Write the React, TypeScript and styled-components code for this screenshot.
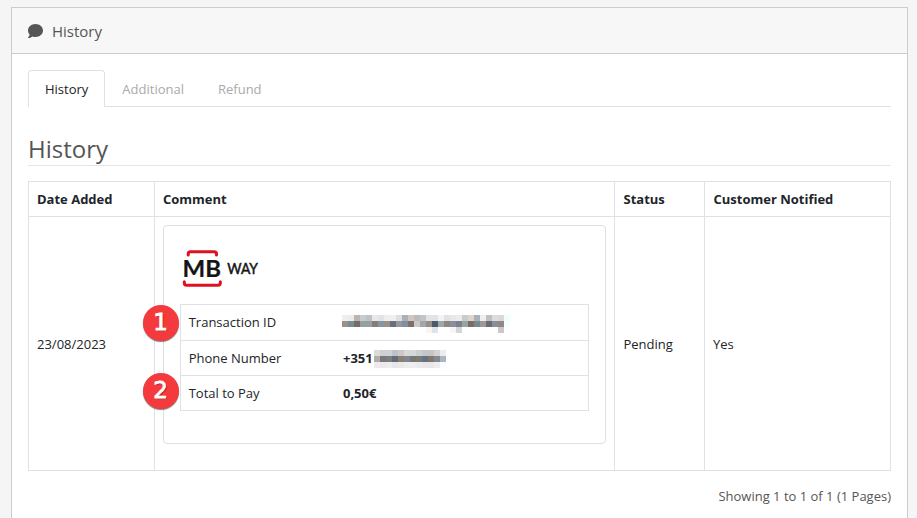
import React from "react";
import styled, { createGlobalStyle } from "styled-components";

const Global = createGlobalStyle`
  *, *::before, *::after { box-sizing: border-box; }
  body { margin: 0; background: #f5f5f5; color: #212529;
    font: 13px/19.5px "Open Sans", "Noto Sans", sans-serif; }
`;
const Page = styled.main`height: 518px; overflow: hidden; padding: 7px 9px 0 11px;`;
const Card = styled.section`
  height: 511px; background: #fff; border: 1px solid #ccc; border-bottom: 0;
`;
const CardHeader = styled.header`
  height: 46px; padding: 3px 16px 0; display: flex; align-items: center; gap: 9px;
  background: #f7f7f7; border-bottom: 1px solid #ccc;
  color: #555; font-size: 15px;
`;
const CommentIcon = styled.svg`display: block; width: 15px; height: 16px; margin-top: -3px;`;
const CardBody = styled.div`padding: 16px 16px 0;`;
const Tabs = styled.nav`display: flex; height: 37px; border-bottom: 1px solid #dee2e6;`;
const Tab = styled.a<{ $active?: boolean }>`
  height: 37px; padding: 9px 16px 0; border: 1px solid ${p => (p.$active ? "#dee2e6" : "transparent")};
  border-bottom: 0; border-radius: 4px 4px 0 0;
  background: ${p => (p.$active ? "#fff" : "transparent")};
  color: ${p => (p.$active ? "#222" : "#aaa")};
`;
const Title = styled.h2`
  margin: 26px 0 15px; height: 33px; border-bottom: 1px solid #e5e5e5;
  font-size: 24px; line-height: 31px; font-weight: 400; color: #555;
`;
const Table = styled.table`
  width: 863px; height: 290px; table-layout: fixed; border-collapse: collapse;
`;
const Column = styled.col<{ $width?: number }>`width: ${p => (p.$width ? `${p.$width}px` : "auto")};`;
const Cell = styled.td`
  border: 1px solid #dee2e6; padding: 10px 8px 8px; vertical-align: middle;
  &:nth-child(3) { padding-left: 8.5px; }
`;
const Head = styled.th`
  height: 35px; border: 1px solid #dee2e6; padding: 2px 8px 0; text-align: left; font-weight: 700;
  &:nth-child(n + 3) { padding-left: 8.5px; }
`;
const CommentCell = styled(Cell)`padding: 8px; vertical-align: top;`;
const Payment = styled.div`
  height: 219px; border: 1px solid #dfdfdf; border-radius: 4px; padding: 16px;
`;
const Logo = styled.svg`display: block; width: 80px; height: 62px;`;
const Details = styled.dl`
  margin: 0; width: 409px; border: 1px solid #dee2e6;
`;
const Detail = styled.div`
  position: relative; display: grid; grid-template-columns: 154.3px 1fr; align-items: start;
  height: 35px; padding: 7px 0 0 7.7px; line-height: 20px;
  & + & { border-top: 1px solid #dee2e6; }
`;
const Term = styled.dt``;
const Value = styled.dd`margin: 0; height: 20px; display: flex; align-items: flex-start; font-weight: 700;`;
const MosaicSvg = styled.svg<{ $left: number; $top: number }>`
  display: block; flex: none; margin: ${p => p.$top}px 0 0 ${p => p.$left}px;
`;
const Badge = styled.span<{ $top: number }>`
  position: absolute; left: -38px; top: ${p => p.$top}px; width: 36px; height: 36px; border-radius: 50%;
  background: #f43a3c; box-shadow: 0 1px 1px rgba(0, 0, 0, 0.5);
  color: #fff; font: 400 23px/35px "DejaVu Sans", sans-serif; text-align: center; text-indent: -1px;
  -webkit-text-stroke: 0.8px #fff; text-shadow: 1px 1px 1px rgba(0, 0, 0, 0.4);
`;
const Footer = styled.footer`margin-top: 16px; text-align: right; color: #555;`;

const CELL = 6;

/* Rows of hex colours; "-" leaves a cell empty. */
const TRANSACTION = [
  "eeeeee ebebeb bcb6b3 c8cbcc bcc3c8 e8e8e8 e3e3e3 eeeeee f0f0f0 e0dfdc a9b0b8 d3c5bd b9bdbd bfc5c8 e5e3e1 e0e4e6 f3f3f3 e2e2e4 e8e8e8 ececec c6cccd dcd5c8 a8b2b8 ebeff2 c0c0c0 dedddd ded7d7 efffff",
  "979190 7d8a91 766d6a 95a0a3 95a0a3 887d72 8696a4 999087 686f7c 92999c 808e9d 7a706c cdcac6 a3a7a8 978f8b 4f5969 9fa8a8 8e8780 84909f 7c8087 9aa3a0 7c6d61 78888f 9f9894 6a6d72 87909a 938887 f4ffff",
  "- - - - - - - - - - - - - - f9f5ee dde4ec - - faf5f0 d2d5d9 - - - - - - ccc8ca -",
];
const PHONE = [
  "dedad5 cdd1d4 cdd2d6 bcc2c8 cfc9c5 d8d8d8 d6d8d8 cbcfd2 c2c8cb c8c4c3 d5d3d2 e8eef3",
  "b4aca6 787878 7c7f80 646b7c 8c8076 7e8894 767777 7b7b75 657286 83766f 828990 aab5be",
  "eceaea ebe9eb ededee e9e6ea ebe8ea efedee f0edef ebebee ebe8ea e8e7ea efecee fafcff",
];

function Mosaic({ rows, left, top }: { rows: string[]; left: number; top: number }) {
  const cells = rows.map(row => row.split(" "));
  return (
    <MosaicSvg $left={left} $top={top} width={cells[0].length * CELL} height={rows.length * CELL} shapeRendering="crispEdges" aria-hidden>
      {cells.map((row, y) =>
        row.map((color, x) =>
          color === "-" ? null : <rect key={`${x}-${y}`} x={x * CELL} y={y * CELL} width={CELL} height={CELL} fill={`#${color}`} />
        )
      )}
    </MosaicSvg>
  );
}

function MbWayLogo() {
  return (
    <Logo viewBox="0 0 80 62" aria-label="MB WAY">
      <g fill="none" stroke="#df1020" strokeWidth="3" strokeLinecap="round">
        <path d="M8.200 13V12Q8.200 9.800 10.500 9.800H34Q36.500 9.800 36.500 12V13" />
        <path d="M4.300 39.800V41Q4.300 43.200 6.500 43.200H38Q40.300 43.200 40.300 41V39.800" />
      </g>
      <g fontFamily="Lato, sans-serif" fill="#151515" stroke="#151515">
        <text x="2.600" y="34.800" fontSize="22.500" fontWeight="700" strokeWidth="0.200" textLength="38.500" lengthAdjust="spacingAndGlyphs">MB</text>
        <text x="47.200" y="31.800" fontSize="15" fontWeight="400" strokeWidth="0.500" textLength="30.700" lengthAdjust="spacingAndGlyphs">WAY</text>
      </g>
    </Logo>
  );
}

export default function App() {
  return (
    <>
      <Global />
      <Page>
        <Card>
          <CardHeader>
            <CommentIcon viewBox="0 0 512 512" preserveAspectRatio="none" fill="#555">
              <path d="M256 32C114.600 32 0 125.100 0 240c0 49.600 21.400 95 57 130.700C44.500 421.100 2.700 466 2.200 466.500c-2.200 2.300-2.800 5.700-1.500 8.700S4.800 480 8 480c66.300 0 116-31.800 140.600-51.400 32.700 12.300 69 19.400 107.400 19.400 141.400 0 256-93.100 256-208S397.400 32 256 32z" />
            </CommentIcon>
            History
          </CardHeader>
          <CardBody>
            <Tabs>
              <Tab $active>History</Tab>
              <Tab>Additional</Tab>
              <Tab>Refund</Tab>
            </Tabs>
            <Title>History</Title>
            <Table>
              <colgroup>
                <Column $width={126} />
                <Column $width={460} />
                <Column $width={90} />
                <Column />
              </colgroup>
              <thead>
                <tr>
                  <Head>Date Added</Head>
                  <Head>Comment</Head>
                  <Head>Status</Head>
                  <Head>Customer Notified</Head>
                </tr>
              </thead>
              <tbody>
                <tr>
                  <Cell>23/08/2023</Cell>
                  <CommentCell>
                    <Payment>
                      <MbWayLogo />
                      <Details>
                        <Detail>
                          <Badge $top={0}>1</Badge>
                          <Term>Transaction ID</Term>
                          <Value><Mosaic rows={TRANSACTION} left={-1} top={3} /></Value>
                        </Detail>
                        <Detail>
                          <Term>Phone Number</Term>
                          <Value>+351<Mosaic rows={PHONE} left={1} top={2} /></Value>
                        </Detail>
                        <Detail>
                          <Badge $top={-3}>2</Badge>
                          <Term>Total to Pay</Term>
                          <Value>0,50€</Value>
                        </Detail>
                      </Details>
                    </Payment>
                  </CommentCell>
                  <Cell>Pending</Cell>
                  <Cell>Yes</Cell>
                </tr>
              </tbody>
            </Table>
            <Footer>Showing 1 to 1 of 1 (1 Pages)</Footer>
          </CardBody>
        </Card>
      </Page>
    </>
  );
}
